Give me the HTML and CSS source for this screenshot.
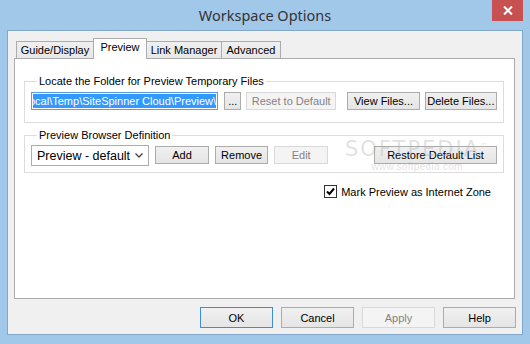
FILE: index.html
```html
<!DOCTYPE html>
<html lang="en">
<head>
    <meta charset="UTF-8">
    <title>Workspace Options</title>
    <link rel="stylesheet" href="styles.css">
</head>
<body>
    <div class="window">
        <!-- Title bar -->
        <div class="titlebar">
            <span class="title">Workspace Options</span>
            <button class="close-btn" type="button">
                <svg width="10" height="9" viewBox="0 0 10 9">
                    <path d="M1 0.5 L9 8.5 M9 0.5 L1 8.5" stroke="#fff" stroke-width="2"/>
                </svg>
            </button>
        </div>

        <div class="client">
            <!-- Tabs -->
            <div class="tabs">
                <div class="tab tab-guide">Guide/Display</div>
                <div class="tab tab-preview active">Preview</div>
                <div class="tab tab-link">Link Manager</div>
                <div class="tab tab-advanced">Advanced</div>
            </div>

            <div class="panel">
                <fieldset class="group group-folder">
                    <legend>Locate the Folder for Preview Temporary Files</legend>
                    <div class="row">
                        <div class="path-input"><span class="selected">ocal\Temp\SiteSpinner Cloud\Preview\</span></div>
                        <button class="btn btn-dots" type="button">...</button>
                        <button class="btn btn-reset" type="button" disabled>Reset to Default</button>
                        <button class="btn btn-view" type="button">View Files...</button>
                        <button class="btn btn-delete" type="button">Delete Files...</button>
                    </div>
                </fieldset>

                <fieldset class="group group-browser">
                    <legend>Preview Browser Definition</legend>
                    <div class="row">
                        <div class="combo">
                            <span>Preview - default</span>
                            <svg width="8" height="5" viewBox="0 0 8 5">
                                <path d="M0.5 0.5 L4 4 L7.5 0.5" fill="none" stroke="#444" stroke-width="1.3"/>
                            </svg>
                        </div>
                        <button class="btn btn-small btn-add" type="button">Add</button>
                        <button class="btn btn-small" type="button">Remove</button>
                        <button class="btn btn-small" type="button" disabled>Edit</button>
                        <button class="btn btn-restore" type="button">Restore Default List</button>
                    </div>
                </fieldset>

                <div class="check-row">
                    <span class="checkbox">
                        <svg width="11" height="11" viewBox="0 0 11 11">
                            <path d="M2 5.5 L4.5 8 L9 2.5" fill="none" stroke="#000" stroke-width="2"/>
                        </svg>
                    </span>
                    <span>Mark Preview as Internet Zone</span>
                </div>

                <!-- watermark over the content -->
                <div class="watermark">
                    <span class="wm-big">SOFTPEDIA<sup>™</sup></span>
                    <span class="wm-small">www.softpedia.com</span>
                </div>
            </div>

            <!-- Dialog buttons -->
            <div class="footer">
                <button class="btn btn-dialog default" type="button">OK</button>
                <button class="btn btn-dialog" type="button">Cancel</button>
                <button class="btn btn-dialog" type="button" disabled>Apply</button>
                <button class="btn btn-dialog" type="button">Help</button>
            </div>
        </div>
    </div>
</body>
</html>
```

FILE: styles.css
```css
* {
    box-sizing: border-box;
}

body {
    margin: 0;
    width: 530px;
    height: 344px;
    overflow: hidden;
    font-family: 'Liberation Sans', Arial, sans-serif;
    font-size: 11px;
    color: #000;
}

.window {
    width: 530px;
    height: 344px;
    background: #a2c8e9;
    display: flex;
    flex-direction: column;
}

/* Title bar */
.titlebar {
    height: 30px;
    display: grid;
    grid-template-columns: 1fr auto 1fr;
}

.title {
    grid-column: 2;
    font-family: 'Noto Sans', sans-serif;
    font-size: 14.5px;
    color: #333;
    line-height: 30px;
}

.close-btn {
    grid-column: 3;
    justify-self: end;
    align-self: start;
    width: 31px;
    height: 21px;
    margin-right: 7px;
    border: none;
    padding: 0;
    background: #c75050;
    display: flex;
    align-items: center;
    justify-content: center;
}

/* Client area */
.client {
    margin: 0 7px;
    height: 305px;
    border: 1px solid #83a7c9;
    background: #f0f0f0;
    display: flex;
    flex-direction: column;
}

.tabs {
    display: flex;
    align-items: flex-end;
    height: 20px;
    margin-top: 7px;
    padding-left: 8px;
}

.tab {
    height: 17px;
    border: 1px solid #acacac;
    border-bottom: none;
    background: linear-gradient(#f0f0f0, #e8e8e8);
    text-align: center;
    line-height: 16px;
    margin-left: -1px;
}

.tab:first-child {
    margin-left: 0;
}

.tab-guide { width: 78px; }
.tab-preview { width: 54px; }
.tab-link { width: 76px; }
.tab-advanced { width: 60px; }

.tab.active {
    height: 21px;
    margin-bottom: -1px;
    background: #fff;
    position: relative;
    z-index: 1;
    line-height: 17px;
}

.panel {
    position: relative;
    height: 241px;
    margin: 0 7px 0 6px;
    border: 1px solid #acacac;
    background: #fff;
    padding: 0 10px 0 9px;
}

/* Group boxes */
.group {
    margin: 16px 0 0;
    padding: 4px 6px 12px;
    border: 1px solid #dcdcdc;
    min-width: 0;
}

.group legend {
    padding: 0 2px;
    margin-left: 6px;
    line-height: 13px;
}

.group-browser {
    margin-top: 6px;
    padding: 3px 6px 6px;
}

.row {
    display: flex;
    align-items: flex-start;
}

.path-input {
    width: 189px;
    height: 18px;
    border: 1px solid #569de5;
    padding: 1px;
    overflow: hidden;
    white-space: nowrap;
}

.selected {
    display: block;
    height: 14px;
    line-height: 14px;
    background: #3399ff;
    color: #fff;
    text-indent: -4px;
}

/* Buttons */
.btn {
    height: 18px;
    padding: 0;
    border: 1px solid #acacac;
    background: linear-gradient(#f0f0f0, #e5e5e5);
    font-family: 'Liberation Sans', Arial, sans-serif;
    font-size: 11px;
    color: #000;
    text-align: center;
}

.btn:disabled {
    background: #f4f4f4;
    border-color: #d9d9d9;
    color: #838383;
}

.btn-dots { width: 17px; margin-left: 6px; }
.btn-reset { width: 91px; margin-left: 5px; }
.btn-view { width: 73px; margin-left: 11px; }
.btn-delete { width: 73px; margin-left: 5px; }

.combo {
    width: 119px;
    height: 21px;
    border: 1px solid #acacac;
    background: #fff;
    display: flex;
    align-items: center;
    justify-content: space-between;
    padding: 0 5px 0 5px;
    font-size: 12.5px;
}

.btn-small {
    width: 54px;
    margin: 1px 0 0 6px;
}

.btn-add {
    margin-left: 6px;
}

.btn-restore {
    width: 124px;
    margin: 1px 0 0 46px;
}

/* Checkbox */
.check-row {
    display: flex;
    justify-content: flex-end;
    align-items: center;
    gap: 4px;
    margin: 12px 13px 0 0;
}

.checkbox {
    width: 13px;
    height: 13px;
    border: 1px solid #333;
    background: #fff;
    display: flex;
    align-items: center;
    justify-content: center;
}

/* Watermark */
.watermark {
    position: absolute;
    left: 330px;
    top: 75px;
    display: flex;
    flex-direction: column;
    align-items: center;
    color: rgba(170, 170, 170, 0.35);
    pointer-events: none;
}

.wm-big {
    font-family: 'DejaVu Sans', sans-serif;
    font-size: 21px;
    letter-spacing: 2px;
    line-height: 24px;
}

.wm-big sup {
    font-size: 7px;
}

.wm-small {
    font-size: 10px;
    letter-spacing: 0.3px;
}

/* Footer */
.footer {
    display: flex;
    justify-content: flex-end;
    gap: 8px;
    padding: 8px 6px 0 0;
}

.btn-dialog {
    width: 73px;
    height: 21px;
}

.btn-dialog.default {
    border-color: #3c8ddc;
}
```
